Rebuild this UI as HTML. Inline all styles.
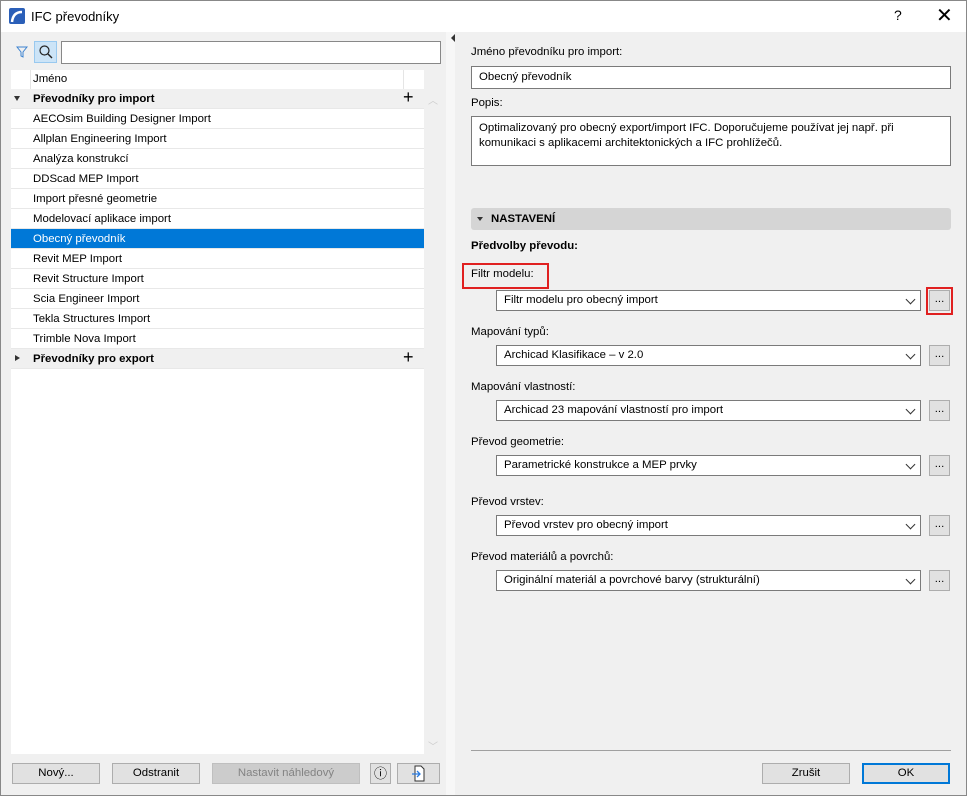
<!DOCTYPE html>
<html><head><meta charset="utf-8"><style>
*{box-sizing:border-box;margin:0;padding:0}
body{width:967px;height:796px;overflow:hidden;background:#f0f0f0;font-family:"Liberation Sans",sans-serif;font-size:11.4px;color:#000;position:relative}
.a{position:absolute}
.title{left:0;top:0;width:967px;height:32px;background:#fff;border:1px solid #888;border-bottom:none}
.win{left:0;top:32px;width:967px;height:764px;border:1px solid #888;border-top:none}
.row{position:absolute;left:11px;width:413px;height:20px;line-height:20px;padding-left:22px;border-bottom:1px solid #e8e8e8;background:#fff}
.grp{background:#f0f0f0;font-weight:bold;padding-left:22px}
.sel{background:#0078d7;color:#fff}
.inp{background:#fff;border:1px solid #7a7a7a;padding-left:7px;line-height:21px}
.sl{background:#fff;border:1px solid #7a7a7a;padding-left:7px;line-height:19px;height:21px;width:425px;left:496px}
.sl:after{content:"";position:absolute;right:6px;top:5px;width:6px;height:6px;border-right:1px solid #333;border-bottom:1px solid #333;transform:rotate(45deg)}
.dots{left:929px;width:21px;height:21px;background:#e1e1e1;border:1px solid #adadad;text-align:center;line-height:16px}
.btn{background:#e1e1e1;border:1px solid #adadad;height:21px;text-align:center;line-height:19px}
.lab{left:471px}
.red{border:2px solid #e02020}
</style></head><body>
<div class="a title"></div>
<svg class="a" style="left:9px;top:8px" width="16" height="16"><rect width="16" height="16" rx="2" fill="#2b5fb8"/><path d="M3 14 Q4 4 13 4" stroke="#fff" stroke-width="2.5" fill="none"/></svg>
<div class="a" style="left:31px;top:9px;font-size:13px">IFC převodníky</div>
<div class="a" style="left:894px;top:7px;font-size:14px">?</div>
<div class="a" style="left:936px;top:3px;font-size:20px;font-weight:300">✕</div>
<div class="a win"></div>
<div class="a" style="left:446px;top:32px;width:9px;height:763px;background:#f7f7f7"></div>
<div class="a" style="left:451px;top:34px;width:0;height:0;border-top:4px solid transparent;border-bottom:4px solid transparent;border-right:4px solid #333"></div>
<svg class="a" style="left:16px;top:45px" width="12" height="14"><path d="M1 2 H11 L7 7 V12 L5 11 V7 Z" fill="none" stroke="#3b82d0"/></svg>
<div class="a" style="left:34px;top:41px;width:23px;height:22px;background:#cce4f7;border:1px solid #99c9ef"></div>
<svg class="a" style="left:38px;top:44px" width="16" height="16"><circle cx="6.5" cy="6.5" r="4.5" fill="none" stroke="#222" stroke-width="1.2"/><path d="M10 10 L14 14" stroke="#222" stroke-width="1.4"/></svg>
<div class="a inp" style="left:61px;top:41px;width:380px;height:23px;border-color:#888"></div>
<div class="a" style="left:11px;top:70px;width:413px;height:684px;background:#fff"></div>
<div class="a" style="left:11px;top:70px;width:413px;height:19px;line-height:19px;padding-left:22px;background:#fff">Jméno</div>
<div class="a" style="left:30px;top:70px;width:1px;height:19px;background:#e5e5e5"></div>
<div class="a" style="left:403px;top:70px;width:1px;height:19px;background:#e5e5e5"></div>
<div class="row grp" style="top:89px">Převodníky pro import</div>
<div class="a" style="left:14px;top:96px;border-left:3px solid transparent;border-right:3px solid transparent;border-top:5px solid #333"></div>
<div class="a" style="left:403px;top:87px;font-size:18px">+</div>
<div class="row" style="top:109px">AECOsim Building Designer Import</div>
<div class="row" style="top:129px">Allplan Engineering Import</div>
<div class="row" style="top:149px">Analýza konstrukcí</div>
<div class="row" style="top:169px">DDScad MEP Import</div>
<div class="row" style="top:189px">Import přesné geometrie</div>
<div class="row" style="top:209px">Modelovací aplikace import</div>
<div class="row sel" style="top:229px">Obecný převodník</div>
<div class="row" style="top:249px">Revit MEP Import</div>
<div class="row" style="top:269px">Revit Structure Import</div>
<div class="row" style="top:289px">Scia Engineer Import</div>
<div class="row" style="top:309px">Tekla Structures Import</div>
<div class="row" style="top:329px">Trimble Nova Import</div>
<div class="row grp" style="top:349px">Převodníky pro export</div>
<div class="a" style="left:15px;top:355px;border-top:3px solid transparent;border-bottom:3px solid transparent;border-left:5px solid #333"></div>
<div class="a" style="left:403px;top:347px;font-size:18px">+</div>
<div class="a" style="left:428px;top:92px;color:#ccc;font-size:10px">︿</div>
<div class="a" style="left:428px;top:738px;color:#ccc;font-size:10px">﹀</div>
<div class="a btn" style="left:12px;top:763px;width:88px">Nový...</div>
<div class="a btn" style="left:112px;top:763px;width:88px">Odstranit</div>
<div class="a btn" style="left:212px;top:763px;width:148px;background:#ccc;color:#838383;border-color:#bfbfbf">Nastavit náhledový</div>
<div class="a btn" style="left:370px;top:763px;width:21px;font-size:13px">ⓘ</div>
<div class="a btn" style="left:397px;top:763px;width:43px"><svg width="16" height="17" style="margin-top:1px"><path d="M4 1 H10 L13 4 V16 H4 Z" fill="#fff" stroke="#333"/><path d="M1 9 H9 M6 6 L9 9 L6 12" stroke="#2a7be0" fill="none" stroke-width="1.3"/></svg></div>
<div class="a lab" style="top:46px">Jméno převodníku pro import:</div>
<div class="a inp" style="left:471px;top:66px;width:480px;height:23px">Obecný převodník</div>
<div class="a lab" style="top:97px">Popis:</div>
<div class="a inp" style="left:471px;top:116px;width:480px;height:50px;line-height:15px;padding-top:4px;padding-right:30px">Optimalizovaný pro obecný export/import IFC. Doporučujeme používat jej např. při komunikaci s aplikacemi architektonických a IFC prohlížečů.</div>
<div class="a" style="left:471px;top:208px;width:480px;height:22px;background:#d5d5d5;border-radius:3px;font-weight:bold;line-height:22px;padding-left:20px">NASTAVENÍ</div>
<div class="a" style="left:477px;top:217px;border-left:3px solid transparent;border-right:3px solid transparent;border-top:4px solid #333"></div>
<div class="a lab" style="top:240px;font-weight:bold">Předvolby převodu:</div>
<div class="a red" style="left:462px;top:263px;width:87px;height:26px"></div>
<div class="a lab" style="top:268px">Filtr modelu:</div>
<div class="a sl" style="top:290px">Filtr modelu pro obecný import</div>
<div class="a dots" style="top:290px">...</div>
<div class="a red" style="left:926px;top:287px;width:27px;height:28px"></div>
<div class="a lab" style="top:326px">Mapování typů:</div>
<div class="a sl" style="top:345px">Archicad Klasifikace – v 2.0</div>
<div class="a dots" style="top:345px">...</div>
<div class="a lab" style="top:381px">Mapování vlastností:</div>
<div class="a sl" style="top:400px">Archicad 23 mapování vlastností pro import</div>
<div class="a dots" style="top:400px">...</div>
<div class="a lab" style="top:436px">Převod geometrie:</div>
<div class="a sl" style="top:455px">Parametrické konstrukce a MEP prvky</div>
<div class="a dots" style="top:455px">...</div>
<div class="a lab" style="top:496px">Převod vrstev:</div>
<div class="a sl" style="top:515px">Převod vrstev pro obecný import</div>
<div class="a dots" style="top:515px">...</div>
<div class="a lab" style="top:551px">Převod materiálů a povrchů:</div>
<div class="a sl" style="top:570px">Originální materiál a povrchové barvy (strukturální)</div>
<div class="a dots" style="top:570px">...</div>
<div class="a" style="left:471px;top:750px;width:480px;height:1px;background:#a0a0a0"></div>
<div class="a btn" style="left:762px;top:763px;width:88px">Zrušit</div>
<div class="a btn" style="left:862px;top:763px;width:88px;border:2px solid #0078d7;line-height:17px">OK</div>
</body></html>
